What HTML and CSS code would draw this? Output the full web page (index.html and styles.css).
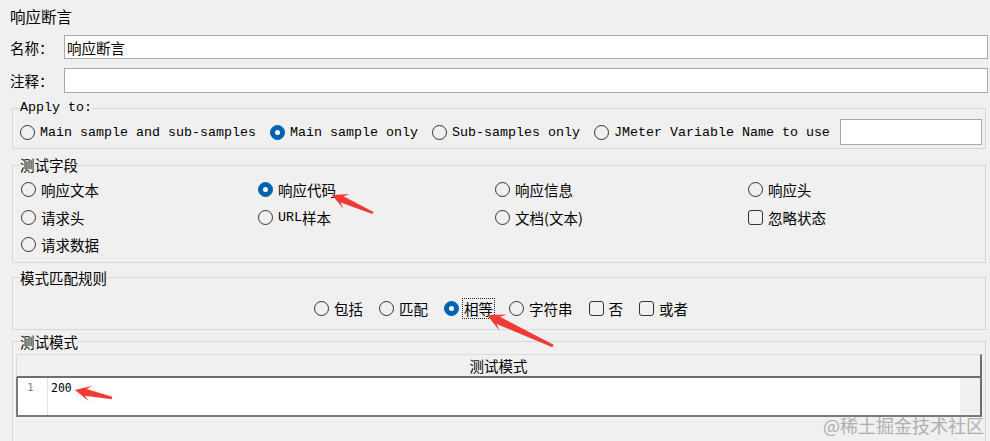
FILE: index.html
```html
<!DOCTYPE html>
<html lang="zh-CN">
<head>
<meta charset="utf-8">
<title>响应断言</title>
<link rel="stylesheet" href="styles.css">
</head>
<body>
<div class="panel">
  <div class="title">响应断言</div>

  <div class="field-row">
    <span class="field-label">名称：</span>
    <div class="text-input">响应断言</div>
  </div>
  <div class="field-row tall">
    <span class="field-label">注释：</span>
    <div class="text-input"></div>
  </div>

  <fieldset class="group apply">
    <legend class="mono">Apply to:</legend>
    <div class="apply-row">
      <label class="opt"><span class="radio"></span><span class="mono">Main sample and sub-samples</span></label>
      <label class="opt"><span class="radio on"></span><span class="mono">Main sample only</span></label>
      <label class="opt"><span class="radio"></span><span class="mono">Sub-samples only</span></label>
      <label class="opt"><span class="radio"></span><span class="mono">JMeter Variable Name to use</span></label>
      <div class="text-input var-input"></div>
    </div>
  </fieldset>

  <fieldset class="group fields">
    <legend>测试字段</legend>
    <div class="field-grid">
      <label class="opt"><span class="radio"></span>响应文本</label>
      <label class="opt"><span class="radio on"></span>响应代码</label>
      <label class="opt"><span class="radio"></span>响应信息</label>
      <label class="opt"><span class="radio"></span>响应头</label>
      <label class="opt"><span class="radio"></span>请求头</label>
      <label class="opt"><span class="radio"></span><span class="mono">URL</span>样本</label>
      <label class="opt"><span class="radio"></span>文档(文本)</label>
      <label class="opt"><span class="check"></span>忽略状态</label>
      <label class="opt"><span class="radio"></span>请求数据</label>
    </div>
  </fieldset>

  <fieldset class="group rules">
    <legend>模式匹配规则</legend>
    <div class="rule-row">
      <label class="opt"><span class="radio"></span>包括</label>
      <label class="opt"><span class="radio"></span>匹配</label>
      <label class="opt"><span class="radio on"></span><span class="focused">相等</span></label>
      <label class="opt"><span class="radio"></span>字符串</label>
      <label class="opt"><span class="check"></span>否</label>
      <label class="opt"><span class="check"></span>或者</label>
    </div>
  </fieldset>

  <fieldset class="group patterns">
    <legend>测试模式</legend>
    <div class="table">
      <div class="table-head">测试模式</div>
      <div class="editor">
        <div class="gutter">1</div>
        <div class="code">200</div>
        <div class="track"></div>
      </div>
    </div>
  </fieldset>
</div>

<svg class="marks" width="990" height="441" viewBox="0 0 990 441">
  <!-- pointers drawn over the form -->
  <polygon points="332,195 349.8,194.1 343.5,196.2 373.5,211.9 372.5,214.1 340.7,202.6 343.4,208.7"/>
  <polygon points="487,315 507.1,314.5 500.0,316.7 553.6,344.8 552.4,347.2 496.6,323.9 499.5,330.8"/>
  <polygon points="75,390 92.35,385.7 86.5,389.0 112.3,396.8 111.7,399.2 84.9,395.8 88.85,401.3"/>
</svg>

<div class="watermark">@稀土掘金技术社区</div>
</body>
</html>
```

FILE: styles.css
```css
* { box-sizing: border-box; }

html, body {
  margin: 0;
  background: #f0f0f0;
}

body {
  width: 990px;
  height: 441px;
  overflow: hidden;
  position: relative;
  font-family: "Noto Sans CJK SC", "Noto Sans", sans-serif;
  font-size: 14.5px;
  color: #000;
}

.mono {
  font-family: "Liberation Mono", "Noto Sans CJK SC", monospace;
  font-size: 13.33px;
}

.panel {
  padding: 0 2px 0 10px;
}

.title {
  height: 32px;
  line-height: 32px;
  font-size: 15.5px;
}

/* name / comment rows */
.field-row {
  display: flex;
  align-items: center;
  height: 24px;
  margin-top: 3px;
}
.field-row.tall {
  height: 25px;
  margin-top: 9px;
}
.field-label {
  width: 54px;
  white-space: nowrap;
}
.text-input {
  flex: 1;
  height: 100%;
  border: 1px solid #a8a8a8;
  background: #fff;
  padding: 0 2px;
  display: flex;
  align-items: center;
}

/* titled groups */
.group {
  margin: 0 2px;
  border: 1px solid #d6d6d6;
  padding: 0 3px 0 7px;
  min-width: 0;
}
.group legend {
  padding: 0;
  height: 18px;
  line-height: 18px;
}

/* option controls */
.opt {
  display: inline-flex;
  align-items: center;
  white-space: nowrap;
}
.radio {
  width: 15px;
  height: 15px;
  border: 1px solid #333;
  border-radius: 50%;
  margin-right: 5px;
  flex: none;
  position: relative;
}
.radio.on {
  background: #0063b1;
  border-color: #0063b1;
}
.radio.on::after {
  content: "";
  position: absolute;
  left: 4px;
  top: 4px;
  width: 5px;
  height: 5px;
  border-radius: 50%;
  background: #fff;
}
.check {
  width: 15px;
  height: 15px;
  border: 1px solid #333;
  border-radius: 3px;
  margin-right: 5px;
  flex: none;
}

/* Apply to */
.apply {
  margin-top: 6px;
  padding-top: 2px;
  padding-bottom: 3px;
}
.apply-row {
  display: flex;
  align-items: center;
  height: 26px;
  gap: 14px;
}
.var-input {
  margin-left: -4px;
}

/* tested field */
.fields {
  margin-top: 7px;
  padding-top: 2px;
  padding-bottom: 3px;
}
.field-grid {
  display: grid;
  grid-template-columns: 237px 237px 253px 1fr;
  grid-auto-rows: 27.5px;
  align-items: center;
  padding-left: 1px;
}

/* matching rules */
.rules {
  margin-top: 6px;
  padding-top: 12px;
  padding-bottom: 10px;
}
.rule-row {
  display: flex;
  justify-content: center;
  align-items: center;
  height: 20px;
  gap: 16px;
}
.focused {
  outline: 1px dotted #222;
  outline-offset: 1px;
  line-height: 17px;
}

/* patterns table */
.patterns {
  margin-top: 3px;
  padding: 3px 3px 40px 3px;
}
.patterns legend {
  margin-left: 4px;
}
.table-head {
  height: 24px;
  line-height: 21px;
  text-align: center;
  border-top: 1px solid #dcdcdc;
  border-left: 1px solid #dcdcdc;
  border-right: 2px solid #6e6e6e;
  border-bottom: 2px solid #6e6e6e;
}
.editor {
  display: flex;
  height: 39px;
  border-left: 2px solid #7a7a7a;
  border-right: 2px solid #6e6e6e;
  border-bottom: 2px solid #7a7a7a;
}
.gutter {
  width: 30px;
  background: #fff;
  border-right: 1px solid #e2e2e2;
  padding: 2px 0 0 9px;
  font-family: "DejaVu Sans Mono", monospace;
  font-size: 11px;
  line-height: 16px;
  color: #80808c;
}
.code {
  flex: 1;
  background: #fff;
  padding: 2px 0 0 3px;
  font-family: "DejaVu Sans Mono", monospace;
  font-size: 11.5px;
  line-height: 16px;
  color: #000;
}
.track {
  width: 20px;
  background: #f0f0f0;
}

/* overlays */
.marks {
  position: absolute;
  left: 0;
  top: 0;
  pointer-events: none;
}
.marks polygon {
  fill: #ef3a35;
}
.watermark {
  position: absolute;
  left: 823px;
  top: 414px;
  font-size: 18px;
  line-height: 22px;
  color: #a4a4a4;
  opacity: 0.85;
}
```
